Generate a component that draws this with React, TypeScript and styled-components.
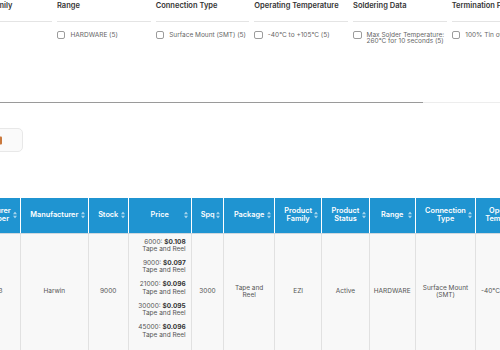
import React from 'react';
import styled, { createGlobalStyle } from 'styled-components';

const Global = createGlobalStyle`
  html, body { margin: 0; padding: 0; background: #fff; }
  body { font-family: Inter, "Noto Sans", sans-serif; overflow: hidden; }
`;

const Viewport = styled.div`
  width: 500px;
  height: 350px;
  overflow: hidden;
`;

const Page = styled.div`
  margin-left: -47px;
  width: 1200px;
  display: flex;
  flex-direction: column;
`;

const FilterArea = styled.div`
  display: flex;
  flex-direction: column;
`;

const FilterRow = styled.div`
  display: flex;
  gap: 5px;
  height: 101.5px;
  padding: 1px 0 0 5.3px;
  box-sizing: border-box;
`;

const FilterCol = styled.div`
  width: 93.7px;
  flex: none;
  display: flex;
  flex-direction: column;
`;

const FilterTitle = styled.div`
  font-size: 7.5px;
  font-weight: 600;
  color: #333;
  line-height: 10px;
  padding-bottom: 10px;
  border-bottom: 1px solid #e4e4e4;
  white-space: nowrap;
`;

const Option = styled.label`
  display: flex;
  align-items: flex-start;
  gap: 5px;
  margin-top: 8.7px;
  font-size: 6.5px;
  line-height: 6.8px;
  color: #666;
`;

const Box = styled.span`
  flex: none;
  width: 8.5px;
  height: 8.5px;
  box-sizing: border-box;
  border: 1px solid #9c9c9c;
  border-radius: 2px;
  background: #fff;
`;

const OptionText = styled.span`
  padding-top: 1px;
  white-space: nowrap;
`;

const Track = styled.div`
  height: 1.6px;
  background: #ededed;
  display: flex;
`;

const Thumb = styled.div`
  width: 470px;
  background: #9a9a9a;
`;

const Toolbar = styled.div`
  display: flex;
  margin-top: 25px;
`;

const Button = styled.div`
  width: 70px;
  height: 24px;
  box-sizing: border-box;
  border: 1px solid #e8e8e8;
  border-radius: 5px;
  background: #fafafa;
  display: flex;
  align-items: center;
  justify-content: flex-end;
  padding: 1px 20px 0 0;
`;

const Table = styled.table`
  margin-top: 46px;
  border-collapse: collapse;
  table-layout: fixed;
  width: 764px;
`;

const Th = styled.th`
  position: relative;
  height: 35px;
  padding: 0 9px;
  background: #1f94d1;
  color: #fff;
  font-size: 7.3px;
  font-weight: 600;
  line-height: 8.3px;
  text-align: center;
  border-right: 1px solid rgba(255, 255, 255, 0.42);
  border-bottom: 1px solid #cfd8de;
  box-sizing: border-box;
`;

const SortMark = styled.svg`
  position: absolute;
  right: 3px;
  top: 50%;
  transform: translateY(-50%);
`;

const Td = styled.td<{ $align?: 'right' | 'center'; $nowrap?: boolean }>`
  background: #f8f8f8;
  border: 1px solid #e1e1e1;
  color: #555;
  font-size: 6.5px;
  line-height: 7.4px;
  text-align: ${p => p.$align ?? 'center'};
  vertical-align: ${p => (p.$align === 'right' ? 'top' : 'middle')};
  padding: ${p => (p.$align === 'right' ? '5px 5px 5px 4px' : '5px 4px')};
  white-space: ${p => (p.$nowrap ? 'nowrap' : 'normal')};
`;

const PriceBlock = styled.div`
  margin-bottom: 6.6px;
`;

const PriceValue = styled.b`
  font-weight: 700;
  color: #333;
`;

const Sort = () => (
  <SortMark width="4" height="7" viewBox="0 0 4 7">
    <path d="M2 0 L4 2.8 H0 Z M2 7 L0 4.2 H4 Z" fill="rgba(255,255,255,0.6)" />
  </SortMark>
);

const filters = [
  { title: 'Product Family', option: 'EZI (5)' },
  { title: 'Range', option: 'HARDWARE (5)' },
  { title: 'Connection Type', option: 'Surface Mount (SMT) (5)' },
  { title: 'Operating Temperature', option: '-40°C to +105°C (5)' },
  { title: 'Soldering Data', option: 'Max Solder Temperature:\n260°C for 10 seconds (5)' },
  { title: 'Termination Finish', option: '100% Tin over Nickel (5)' },
  { title: 'Packaging', option: 'Tape and Reel (5)' },
];

const columns: { label: string; width: number }[] = [
  { label: 'Manufacturer Part Number', width: 67 },
  { label: 'Manufacturer', width: 67.7 },
  { label: 'Stock', width: 40 },
  { label: 'Price', width: 63 },
  { label: 'Spq', width: 32.6 },
  { label: 'Package', width: 50.7 },
  { label: 'Product Family', width: 47.3 },
  { label: 'Product Status', width: 47.4 },
  { label: 'Range', width: 46 },
  { label: 'Connection Type', width: 60.6 },
  { label: 'Operating Temperature', width: 61.7 },
  { label: 'Soldering Data', width: 90 },
  { label: 'Termination Finish', width: 90 },
];

const prices = [
  ['6000', '$0.108'],
  ['9000', '$0.097'],
  ['21000', '$0.096'],
  ['30000', '$0.095'],
  ['45000', '$0.096'],
];

const IconMark = () => (
  <svg width="9" height="9" viewBox="0 0 9 9">
    <rect x="0" y="0.5" width="9" height="8" rx="1" fill="#c9783d" />
  </svg>
);

export default function App() {
  return (
    <>
      <Global />
      <Viewport>
        <Page>
          <FilterArea>
            <FilterRow>
              {filters.map(f => (
                <FilterCol key={f.title}>
                  <FilterTitle>{f.title}</FilterTitle>
                  <Option>
                    <Box />
                    <OptionText>
                      {f.option.split('\n').map((l, i) => (
                        <React.Fragment key={i}>
                          {i > 0 && <br />}
                          {l}
                        </React.Fragment>
                      ))}
                    </OptionText>
                  </Option>
                </FilterCol>
              ))}
            </FilterRow>
            <Track>
              <Thumb />
            </Track>
          </FilterArea>
          <Toolbar>
            <Button>
              <IconMark />
            </Button>
          </Toolbar>
          <Table>
            <colgroup>
              {columns.map(c => (
                <col key={c.label} style={{ width: c.width }} />
              ))}
            </colgroup>
            <thead>
              <tr>
                {columns.map(c => (
                  <Th key={c.label}>
                    {c.label}
                    <Sort />
                  </Th>
                ))}
              </tr>
            </thead>
            <tbody>
              <tr>
                <Td>S7083-43</Td>
                <Td>Harwin</Td>
                <Td>9000</Td>
                <Td $align="right">
                  {prices.map(([q, v]) => (
                    <PriceBlock key={q}>
                      {q}: <PriceValue>{v}</PriceValue>
                      <br />
                      Tape and Reel
                    </PriceBlock>
                  ))}
                </Td>
                <Td>3000</Td>
                <Td>Tape and Reel</Td>
                <Td>EZI</Td>
                <Td>Active</Td>
                <Td>HARDWARE</Td>
                <Td>Surface Mount (SMT)</Td>
                <Td $nowrap>-40°C to +105°C</Td>
                <Td>Max Solder Temperature: 260°C for 10 seconds</Td>
                <Td>100% Tin over Nickel</Td>
              </tr>
            </tbody>
          </Table>
        </Page>
      </Viewport>
    </>
  );
}
